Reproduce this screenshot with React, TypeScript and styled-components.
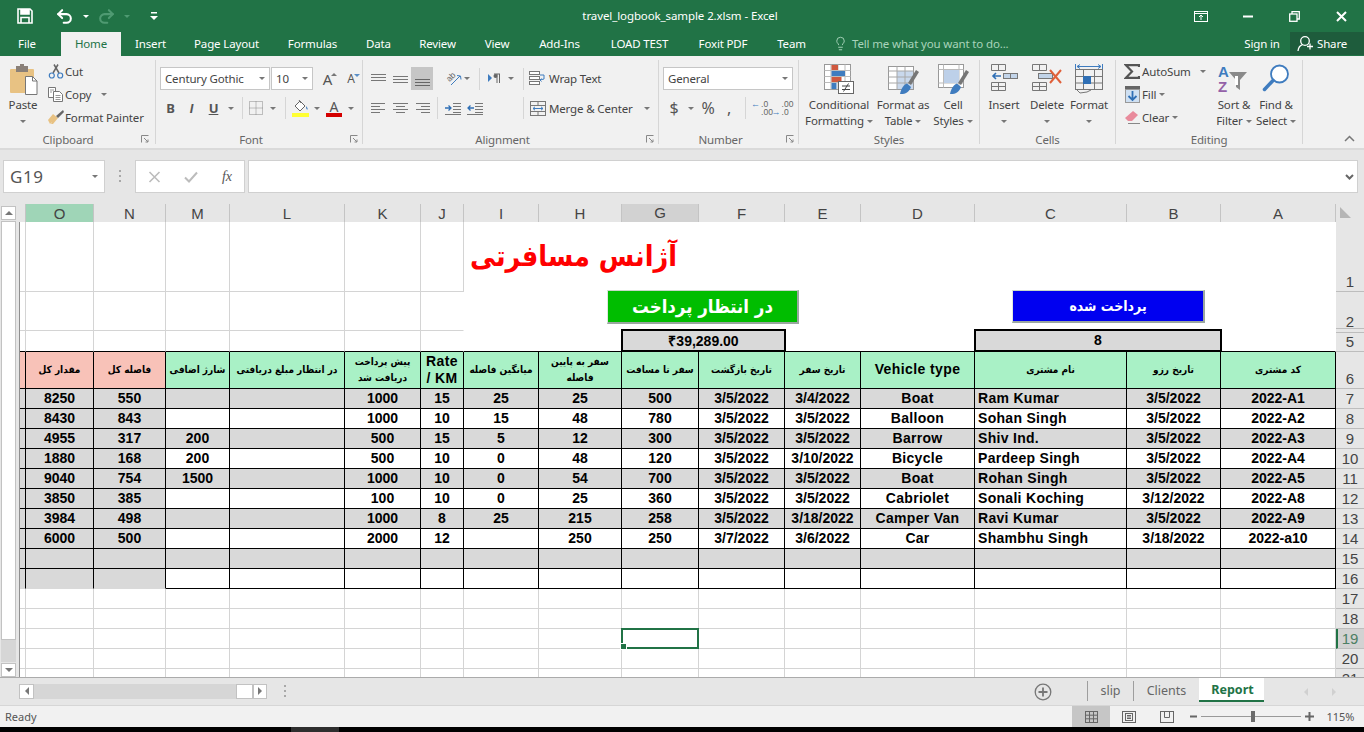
import React from 'react';
import styled, { createGlobalStyle } from 'styled-components';
import { Lightbulb, Redo2, Undo2 } from 'lucide-react';

const UI_FONT = '"Noto Sans", "Open Sans", sans-serif';
const SHEET_FONT = '"Liberation Sans", Arial, sans-serif';
const ARABIC_FONT = '"DejaVu Sans Condensed", "DejaVu Sans", "Liberation Sans", sans-serif';
const GREEN = '#217346';
const INK = '#000000';
const GRIDLINE = '#d4d4d4';
const TRACKS = '6px 68px 72px 64px 115px 76px 43px 75px 83px 77px 86px 76px 114px 152px 94px 115px 28px';

const GlobalStyle = createGlobalStyle`
  html, body { margin: 0; padding: 0; overflow: hidden; background: #000; }
  * { box-sizing: border-box; }
`;

const Page = styled.div`
  width: 1364px;
  height: 732px;
  display: flex;
  flex-direction: column;
  font-family: ${UI_FONT};
  color: #444;
  overflow: hidden;
`;

/* title bar */
const TitleBar = styled.div`
  height: 32px;
  flex: none;
  background: ${GREEN};
  color: #fff;
  display: flex;
  align-items: center;
  position: relative;
`;
const WindowTitle = styled.div`
  position: absolute;
  left: 0;
  right: 4px;
  top: 7px;
  text-align: center;
  font-size: 11.5px;
  letter-spacing: -0.1px;
  line-height: 17px;
  pointer-events: none;
`;
const Slot = styled.div<{ $w: number; $bg?: string }>`
  width: ${p => p.$w}px;
  flex: none;
  height: 100%;
  display: flex;
  align-items: center;
  justify-content: center;
  background: ${p => p.$bg ?? 'transparent'};
`;
const Push = styled.div`
  flex: 1;
`;

/* ribbon tabs */
const TabStrip = styled.div`
  height: 24px;
  flex: none;
  background: ${GREEN};
  color: #fff;
  display: flex;
  font-size: 11.5px;
  letter-spacing: -0.15px;
`;
const RibbonTab = styled.div<{ $w: number; $on?: boolean }>`
  width: ${p => p.$w}px;
  flex: none;
  display: flex;
  align-items: center;
  justify-content: center;
  padding-bottom: 1px;
  white-space: nowrap;
  background: ${p => (p.$on ? '#f1f1f1' : 'transparent')};
  color: ${p => (p.$on ? GREEN : '#fff')};
`;
const TellMe = styled.div`
  display: flex;
  align-items: center;
  gap: 4px;
  margin-left: 12px;
  padding-bottom: 1px;
  color: #a9d3bb;
  white-space: nowrap;
`;
const SignIn = styled.div`
  width: 74px;
  flex: none;
  display: flex;
  align-items: center;
  justify-content: center;
  padding: 0 0 1px 18px;
`;
const ShareBox = styled.div`
  width: 74px;
  flex: none;
  height: 23px;
  background: #1e5c3c;
  display: flex;
  align-items: center;
  gap: 3px;
  padding-left: 7px;
`;

/* ribbon */
const Ribbon = styled.div`
  height: 94px;
  flex: none;
  display: flex;
  padding-top: 4px;
  background: #f1f1f1;
  border-bottom: 2px solid #dadada;
  font-size: 11.5px;
  letter-spacing: -0.15px;
  position: relative;
`;
const Group = styled.div<{ $w: number }>`
  width: ${p => p.$w}px;
  flex: none;
  height: 84px;
  border-right: 1px solid #d6d6d6;
  display: flex;
  flex-direction: column;
`;
const GroupBody = styled.div<{ $left?: number }>`
  height: 72px;
  flex: none;
  display: flex;
  padding-left: ${p => p.$left ?? 0}px;
`;
const Column = styled.div<{ $top?: number }>`
  display: flex;
  flex-direction: column;
  padding-top: ${p => p.$top ?? 0}px;
`;
const ToolRow = styled.div<{ $gap?: number }>`
  display: flex;
  align-items: center;
  height: ${p => (p.$gap ? 24 : 23)}px;
  margin-top: ${p => p.$gap ?? 0}px;
`;
const GroupFoot = styled.div`
  height: 14px;
  flex: none;
  display: flex;
  align-items: center;
  color: #666;
  font-size: 11.5px;
`;
const FootLabel = styled.div`
  flex: 1;
  text-align: center;
`;
const Launcher = styled.div<{ $w: number }>`
  width: ${p => p.$w}px;
  flex: none;
  display: flex;
  justify-content: center;
`;
const Combo = styled.div<{ $w: number }>`
  width: ${p => p.$w}px;
  height: 23px;
  flex: none;
  margin-right: 1px;
  background: #fff;
  border: 1px solid #c6c6c6;
  display: flex;
  align-items: center;
  justify-content: space-between;
  padding: 0 4px 1px;
  white-space: nowrap;
`;
const Caret = styled.i`
  display: inline-block;
  flex: none;
  width: 0;
  height: 0;
  border-left: 3px solid transparent;
  border-right: 3px solid transparent;
  border-top: 3px solid #777;
`;
const Separator = styled.i`
  display: block;
  width: 1px;
  height: 22px;
  background: #d6d6d6;
`;
const FaceB = styled.span`
  font: bold 13px ${UI_FONT};
  color: #555;
`;
const FaceI = styled.span`
  font: italic bold 13px ${SHEET_FONT};
  color: #555;
`;
const FaceU = styled.span`
  font: bold 13px ${UI_FONT};
  color: #555;
  text-decoration: underline;
`;
const GrowA = styled.span<{ $size: number }>`
  font-size: ${p => p.$size}px;
  color: #555;
  position: relative;
  &::after {
    content: '';
    position: absolute;
    right: -5px;
    top: 4px;
    border-left: 3px solid transparent;
    border-right: 3px solid transparent;
    border-${p => (p.$size > 14 ? 'bottom' : 'top')}: 3px solid ${p => (p.$size > 14 ? '#777' : '#5b8fc7')};
  }
`;
const NumberFace = styled.span<{ $size: number }>`
  font-size: ${p => p.$size}px;
  color: #555;
`;
const SmallTool = styled.div<{ $icon: number }>`
  display: flex;
  align-items: center;
  height: 23px;
  padding-bottom: 1px;
  white-space: nowrap;
  & > :first-child {
    width: ${p => p.$icon}px;
    flex: none;
    display: flex;
    justify-content: center;
  }
`;
const ToolCaret = styled(Caret)<{ $gap: number }>`
  margin-left: ${p => p.$gap}px;
`;
const IndentedIcon = styled.span`
  padding-left: 6px;
`;
const AutoSumTool = styled(SmallTool)`
  width: 98px;
`;
const TextTool = styled.span<{ $w?: number }>`
  white-space: nowrap;
  ${p => (p.$w ? `width: ${p.$w}px; flex: none;` : '')}
`;
const BigTool = styled.div<{ $w: number }>`
  width: ${p => p.$w}px;
  flex: none;
  display: flex;
  flex-direction: column;
  align-items: center;
  line-height: 16px;
  white-space: nowrap;
`;
const BigIcon = styled.div`
  height: 37px;
  flex: none;
  display: flex;
  align-items: flex-start;
  justify-content: center;
  padding-top: 4px;
`;
const BigCaretLine = styled.div`
  height: 16px;
  display: flex;
  align-items: center;
  gap: 3px;
`;
const Collapse = styled.div`
  position: absolute;
  right: 9px;
  bottom: 6px;
  line-height: 0;
`;

/* formula bar */
const FormulaBar = styled.div`
  height: 54px;
  flex: none;
  background: #e6e6e6;
  display: flex;
  padding: 10px 6px 11px 3px;
`;
const InputBox = styled.div<{ $w?: number }>`
  ${p => (p.$w ? `width: ${p.$w}px; flex: none;` : 'flex: 1;')}
  background: #fff;
  border: 1px solid #d0d0d0;
  display: flex;
  align-items: center;
`;
const NameText = styled.span`
  font-size: 17px;
  letter-spacing: 0.6px;
  color: #555;
  padding-left: 6px;
  flex: 1;
`;
const Dots = styled.i`
  display: block;
  width: 2px;
  height: 14px;
  background: repeating-linear-gradient(#a8a8a8 0 2px, transparent 2px 5px);
`;
const FxText = styled.span`
  font: italic 14px "Liberation Serif", serif;
  color: #555;
`;

/* sheet */
const SheetArea = styled.div`
  height: 473px;
  flex: none;
  display: flex;
  background: #e6e6e6;
`;
const VScroll = styled.div`
  width: 19px;
  flex: none;
  display: flex;
  flex-direction: column;
  padding: 2px 3px 0 1px;
`;
const ScrollBtn = styled.div`
  height: 14px;
  flex: none;
  background: #fff;
  border: 1px solid #c2c2c2;
  display: flex;
  align-items: center;
  justify-content: center;
`;
const Arrow = styled.i<{ $dir: 'up' | 'down' | 'left' | 'right'; $c?: string }>`
  display: block;
  width: 0;
  height: 0;
  ${p =>
    p.$dir === 'up' || p.$dir === 'down'
      ? `border-left: 4px solid transparent; border-right: 4px solid transparent; border-${p.$dir === 'up' ? 'bottom' : 'top'}: 4px solid ${p.$c ?? '#777'};`
      : `border-top: 4px solid transparent; border-bottom: 4px solid transparent; border-${p.$dir === 'left' ? 'right' : 'left'}: 4px solid ${p.$c ?? '#777'};`}
`;
const VTrack = styled.div`
  flex: 1;
  display: flex;
  flex-direction: column;
  background: #d6d6d6;
  margin: 1px 0;
`;
const VThumb = styled.div`
  height: 419px;
  background: #fff;
  border: 1px solid #c2c2c2;
`;
const Sheet = styled.div`
  flex: 1;
  display: flex;
  flex-direction: column;
  min-width: 0;
`;
const ColumnHeads = styled.div`
  height: 18px;
  flex: none;
  display: grid;
  grid-template-columns: ${TRACKS};
  padding-left: 1px;
  font: 15px ${SHEET_FONT};
  color: #444;
`;
const ColHead = styled.div<{ $state?: 'sel' | 'tint' }>`
  display: flex;
  align-items: center;
  justify-content: center;
  padding-bottom: 1px;
  background: ${p => (p.$state === 'sel' ? '#d2d2d2' : p.$state === 'tint' ? '#9fd5b7' : '#e6e6e6')};
  border-right: 1px solid #c4c4c4;
  border-bottom: ${p => (p.$state === 'sel' ? `2px solid ${GREEN}` : '1px solid #a6a6a6')};
`;
const Corner = styled.div`
  background: #e6e6e6;
  border-bottom: 1px solid #a6a6a6;
  padding: 3px 0 0 4px;
  line-height: 0;
`;
const Body = styled.div`
  flex: 1;
  min-height: 0;
  position: relative;
  overflow: hidden;
  background: #fff;
  border-left: 1px solid #8f8f8f;
  display: grid;
  grid-template-columns: ${TRACKS};
  grid-template-rows: 70px 39px 21px 37px repeat(15, 20px);
  font: bold 14px ${SHEET_FONT};
  color: #000;
`;
const Cell = styled.div<{
  $fill?: string;
  $right?: string;
  $bottom?: string;
  $span?: number;
  $start?: boolean;
  $airy?: boolean;
}>`
  display: flex;
  align-items: center;
  justify-content: ${p => (p.$start ? 'flex-start' : 'center')};
  text-align: center;
  min-width: 0;
  white-space: nowrap;
  overflow: hidden;
  padding-left: ${p => (p.$start ? 3 : 0)}px;
  padding-bottom: 1px;
  letter-spacing: ${p => (p.$airy ? 0.3 : 0)}px;
  background: ${p => p.$fill ?? '#fff'};
  border-right: 1px solid ${p => p.$right ?? GRIDLINE};
  border-bottom: 1px solid ${p => p.$bottom ?? GRIDLINE};
  grid-column: span ${p => p.$span ?? 1};
`;
const HeadCell = styled(Cell)`
  font: bold 10px/16px ${ARABIC_FONT};
  white-space: normal;
  padding: 0 1px 1px;
  direction: rtl;
`;
const LatinHead = styled(Cell)`
  white-space: pre-line;
  line-height: 17px;
  letter-spacing: 0.4px;
`;
const TotalBox = styled(Cell)`
  margin: -2px -1px 0 -1px;
  border: 2px solid ${INK};
  position: relative;
  z-index: 1;
`;
const PageTitle = styled.span`
  direction: rtl;
  font: bold 28.5px ${ARABIC_FONT};
  color: #ff0000;
  margin: 0 0 0 3px;
`;
const ActiveCell = styled(Cell)`
  overflow: visible;
  position: relative;
  z-index: 2;
`;
const SelectionBox = styled.div`
  position: absolute;
  inset: -1px;
  border: 2px solid ${GREEN};
  &::after {
    content: '';
    position: absolute;
    left: -3px;
    bottom: -3px;
    width: 5px;
    height: 5px;
    background: ${GREEN};
    border: 1px solid #fff;
  }
`;
const ShapeButton = styled.div<{ $x: number; $w: number; $h: number; $fill: string; $size: number }>`
  position: absolute;
  left: ${p => p.$x}px;
  top: 68px;
  width: ${p => p.$w}px;
  height: ${p => p.$h}px;
  background: ${p => p.$fill};
  border-style: solid;
  border-width: 1px 2px 2px 1px;
  border-color: #c8d8c8 #9aa6a0 #9aa6a0 #dfe8df;
  color: #fff;
  display: flex;
  align-items: center;
  justify-content: center;
  direction: rtl;
  font: bold ${p => p.$size}px ${ARABIC_FONT};
  z-index: 1;
`;
const RowHead = styled.div<{ $active?: boolean; $gap?: 'above' | 'below' }>`
  background: ${p => (p.$active ? '#d2d2d2' : '#e6e6e6')};
  color: ${p => (p.$active ? '#4d7f64' : '#444')};
  border-left: ${p => (p.$active ? `2px solid ${GREEN}` : 'none')};
  border-bottom: ${p => (p.$gap === 'above' ? 'none' : '1px solid #bdbdbd')};
  box-shadow: ${p =>
    p.$gap === 'above'
      ? 'inset 0 -2px 0 #e6e6e6, inset 0 -3px 0 #bdbdbd'
      : p.$gap === 'below'
        ? 'inset 0 1px 0 #e6e6e6, inset 0 2px 0 #bdbdbd'
        : 'none'};
  font: 15px ${SHEET_FONT};
  display: flex;
  align-items: flex-end;
  justify-content: center;
  padding-bottom: 1px;
  padding-right: ${p => (p.$active ? 2 : 0)}px;
  line-height: 17px;
`;

/* sheet tabs */
const TabBar = styled.div`
  height: 29px;
  flex: none;
  background: #e6e6e6;
  border-top: 1px solid #ababab;
  border-bottom: 1px solid #d6d6d6;
  display: flex;
  align-items: center;
  padding-left: 19px;
  font-size: 12.5px;
  color: #555;
`;
const HScroll = styled.div`
  width: 248px;
  height: 15px;
  flex: none;
  display: flex;
  margin-bottom: 1px;
`;
const HButton = styled.div<{ $w: number }>`
  width: ${p => p.$w}px;
  flex: none;
  background: #fff;
  border: 1px solid #c2c2c2;
  display: flex;
  align-items: center;
  justify-content: center;
`;
const HTrack = styled.div`
  flex: 1;
  background: #d6d6d6;
`;
const SheetTab = styled.div<{ $w: number; $on?: boolean }>`
  width: ${p => p.$w}px;
  flex: none;
  height: 24px;
  align-self: flex-start;
  display: flex;
  align-items: center;
  justify-content: center;
  padding-left: ${p => (p.$on ? 2 : 0)}px;
  background: ${p => (p.$on ? '#fff' : 'transparent')};
  color: ${p => (p.$on ? GREEN : '#666')};
  font-weight: ${p => (p.$on ? 700 : 400)};
  border-bottom: ${p => (p.$on ? `2px solid ${GREEN}` : 'none')};
`;
const TabDivider = styled.i`
  display: block;
  flex: none;
  width: 1px;
  height: 20px;
  background: #9e9e9e;
  margin-bottom: 2px;
`;

/* status bar */
const StatusBar = styled.div`
  height: 21px;
  flex: none;
  background: #f1f1f1;
  display: flex;
  align-items: center;
  padding-left: 5px;
  font-size: 11px;
  color: #555;
`;
const StatusText = styled.span`
  padding-bottom: 1px;
`;
const ZoomSlider = styled.div`
  width: 100px;
  flex: none;
  height: 1px;
  background: #999;
  position: relative;
`;
const ZoomKnob = styled.div`
  position: absolute;
  left: 50px;
  top: -5px;
  width: 4px;
  height: 11px;
  background: #6b6b6b;
`;
const Taskbar = styled.div`
  height: 5px;
  flex: none;
  background: #000;
  display: flex;
  padding-left: 291px;
`;
const TaskbarItem = styled.div`
  width: 48px;
  background: #2e2e2e;
`;

const ExpandGlyph = () => (
  <svg width="9" height="9" viewBox="0 0 9 9" fill="none" stroke="#888">
    <path d="M.5 .5h7M.5 .5v7" />
    <path d="M3 3l4 4M7 4.5V7H4.5" />
  </svg>
);

const SaveIcon = () => (
  <svg width="16" height="16" viewBox="0 0 16 16" fill="none" stroke="#fff" strokeWidth="1.6">
    <path d="M1 1h12l2 2v12H1z" />
    <path d="M4 1v5h8V1" fill="#fff" />
    <path d="M4 15V9.500h8V15" />
  </svg>
);
const QatCustomize = () => (
  <svg width="8" height="9" viewBox="0 0 8 9" fill="#fff">
    <rect x="1" y="0" width="6" height="1.500" />
    <path d="M0 4h8L4 8z" />
  </svg>
);
const WhiteCaret = styled(Caret)<{ $dim?: boolean }>`
  border-top-color: ${p => (p.$dim ? '#4f9a72' : '#fff')};
`;
const RibbonDisplay = () => (
  <svg width="14" height="11" viewBox="0 0 14 11" fill="none" stroke="#fff">
    <rect x=".5" y=".5" width="13" height="10" />
    <path d="M.5 2.500h13M7 9V4.500M5 6l2-2 2 2" />
  </svg>
);
const MinimizeGlyph = () => (
  <svg width="10" height="3" viewBox="0 0 10 3">
    <rect width="10" height="2" y=".5" fill="#fff" />
  </svg>
);
const RestoreGlyph = () => (
  <svg width="11" height="11" viewBox="0 0 11 11" fill="none" stroke="#fff" strokeWidth="1.300">
    <rect x=".7" y="3" width="7.300" height="7.300" />
    <path d="M3 3V.7h7.300V8H8" />
  </svg>
);
const CloseGlyph = () => (
  <svg width="11" height="11" viewBox="0 0 11 11" stroke="#fff" strokeWidth="2">
    <path d="M1 1l9 9M10 1l-9 9" />
  </svg>
);
const ShareGlyph = () => (
  <svg width="17" height="17" viewBox="0 0 17 17" fill="none" stroke="#fff" strokeWidth="1.300">
    <circle cx="8" cy="6" r="4.300" />
    <path d="M1 16c.5-3.500 2.500-5.700 4.500-6.300M10 11.500h6M13 8.500v6" />
  </svg>
);
const PasteIcon = () => (
  <svg width="32" height="31" viewBox="-2 0 32 31">
    <rect x="1" y="5" width="24" height="24" rx="1" fill="#e8c283" />
    <rect x="7" y="2" width="12" height="6" fill="#8a8078" />
    <rect x="11" y="0" width="4" height="3" fill="#8a8078" />
    <path d="M16.500 12.500h7l4.500 4.500v13.500H16.500z" fill="#fff" stroke="#777" />
    <path d="M23.500 12.500V17H28" fill="none" stroke="#777" />
  </svg>
);
const ScissorsIcon = () => (
  <svg width="16" height="15" viewBox="0 0 16 15" fill="none">
    <path d="M5 9L10 .5M11 9L6 .5" stroke="#666" strokeWidth="1.500" />
    <circle cx="3.800" cy="11.500" r="2.500" stroke="#3f7cbf" strokeWidth="1.200" />
    <circle cx="12.200" cy="11.500" r="2.500" stroke="#3f7cbf" strokeWidth="1.200" />
  </svg>
);
const CopyIcon = () => (
  <svg width="16" height="15" viewBox="0 0 16 15" fill="#fff" stroke="#777">
    <path d="M.5 .5h7v10h-7z" />
    <path d="M5.500 4.500h6l3 3v7h-9z" />
    <path d="M2 3h4M2 5h2M7.500 8.500h5M7.500 10.500h5M7.500 12.500h5" fill="none" stroke="#999" />
  </svg>
);
const PainterIcon = () => (
  <svg width="16" height="14" viewBox="0 0 16 14">
    <path d="M0 10l5-6 5 4-5 6H3l1-2-2 2z" fill="#e8c283" />
    <path d="M6 4l2 2 7-6 1 2-6 6z" fill="#666" />
  </svg>
);
const BordersIcon = () => (
  <svg width="14" height="14" viewBox="0 0 14 14" fill="none" stroke="#888" strokeDasharray="1 1">
    <rect x=".5" y=".5" width="13" height="13" />
    <path d="M7 .5v13M.5 7h13" />
  </svg>
);
const FillBucketIcon = () => (
  <svg width="18" height="18" viewBox="0 0 18 18">
    <path d="M3 7l5-5 5 5-5 5z" fill="#fff" stroke="#666" />
    <path d="M7 1l2 3" stroke="#666" />
    <path d="M14 7c1.500 2 2 3 1.500 3.500S14 10 14 7z" fill="#3f7cbf" />
    <rect x="0" y="14" width="17" height="4" fill="#ffff33" />
  </svg>
);
const FontColorFace = styled.span`
  display: flex;
  flex-direction: column;
  align-items: center;
  width: 16px;
  font-size: 14px;
  line-height: 13px;
  color: #555;
  &::after {
    content: '';
    width: 16px;
    height: 4px;
    background: #d40000;
  }
`;
const Bars = ({ rows, w = 15, color = '#777' }: { rows: [number, number, number?][]; w?: number; color?: string }) => (
  <svg width={w} height="16" viewBox={`0 0 ${w} 16`} stroke={color}>
    {rows.map(([x, y, len], i) => (
      <path key={i} d={`M${x} ${y + 0.5}h${len ?? w - x}`} />
    ))}
  </svg>
);
const OrientIcon = () => (
  <svg width="17" height="17" viewBox="0 0 17 17" fill="none">
    <text x="2" y="10" fontSize="8.500" fill="#666" transform="rotate(-45 6 8)" fontFamily={SHEET_FONT}>ab</text>
    <path d="M6 15L15 6M12 5.500l3.500.5.500 3.500" stroke="#3f7cbf" />
  </svg>
);
const DirIcon = () => (
  <svg width="13" height="11" viewBox="0 0 13 11">
    <path d="M0 1l4 4-4 4z" fill="#3f7cbf" />
    <path d="M6 1h6M9 1v9M11.500 1v9" stroke="#666" />
    <circle cx="7.500" cy="3" r="2" fill="#666" />
  </svg>
);
const WrapIcon = () => (
  <svg width="17" height="16" viewBox="0 0 17 16" fill="#fff" stroke="#777">
    <rect x=".5" y=".5" width="10" height="3" />
    <rect x=".5" y="5.500" width="10" height="3" />
    <rect x=".5" y="10.500" width="10" height="3" />
    <path d="M11 4h4v4l-4 1M12.500 7.500L11 9l1.500 1.500" fill="none" stroke="#3f7cbf" />
  </svg>
);
const MergeIcon = () => (
  <svg width="16" height="15" viewBox="0 0 16 15" fill="none" stroke="#777">
    <rect x=".5" y=".5" width="15" height="14" />
    <path d="M.5 4.500h15M.5 10.500h15M8 .5v4M8 10.500v4" />
    <path d="M3 7.500h10M5 5.800L3 7.500l2 1.700M11 5.800l2 1.700-2 1.700" stroke="#3f7cbf" />
  </svg>
);
const IndentIcon = ({ out }: { out?: boolean }) => (
  <svg width="17" height="13" viewBox="0 0 17 13" fill="none" stroke="#777">
    <path d="M8 1.500h8M8 4.500h8M8 7.500h8M8 10.500h8M0 12.500h16" />
    <path d={out ? 'M7 6H1M3.500 3.500L1 6l2.500 2.500' : 'M0 6h6M3.500 3.500L6 6 3.500 8.500'} stroke="#2f6fb5" strokeWidth="1.300" />
  </svg>
);
const DecimalFace = styled.span`
  display: grid;
  grid-template-columns: auto auto;
  font: 8.500px/8px ${SHEET_FONT};
  color: #666;
  column-gap: 1px;
  align-items: center;
  letter-spacing: 0;
`;
const BlueArrow = styled.span`
  color: #3f7cbf;
  font-size: 9px;
`;
const CondIcon = () => (
  <svg width="31" height="31" viewBox="0 0 31 31">
    <rect x=".5" y=".5" width="26" height="25" fill="#fff" stroke="#999" />
    <path d="M7 .5v25M14 .5v25M21 .5v25M.5 6.500h26M.5 12.500h26M.5 18.500h26" stroke="#bbb" />
    <rect x="7.500" y="1" width="6.500" height="5" fill="#d0593f" />
    <rect x="7.500" y="7" width="13.500" height="5" fill="#3f7cbf" />
    <rect x="7.500" y="13" width="10" height="5" fill="#d0593f" />
    <rect x="7.500" y="19" width="5" height="6" fill="#3f7cbf" />
    <rect x="14.500" y="17.500" width="15" height="12" fill="#fff" stroke="#666" />
    <path d="M18 22h8M18 25.500h8M24.500 19.500l-5 8" stroke="#444" />
  </svg>
);
const TableIcon = () => (
  <svg width="31" height="31" viewBox="0 0 31 31">
    <rect x=".5" y="2.500" width="25" height="23" fill="#fff" stroke="#999" />
    <rect x="9" y="7" width="16" height="18" fill="#c9d8ec" />
    <path d="M9 2.500v23M17 2.500v23M.5 7h25M.5 13h25M.5 19h25" stroke="#a8a8a8" />
    <path d="M28 6l3 2-8 13-3-2z" fill="#777" />
    <path d="M19 19.500c-3 1-6 5-7 10.500 4 .5 9-1 11-7z" fill="#3f7cbf" />
  </svg>
);
const CellStylesIcon = () => (
  <svg width="31" height="31" viewBox="0 0 31 31">
    <rect x=".5" y=".5" width="25" height="23" fill="#fff" stroke="#999" />
    <path d="M.5 5.500h25M5.500 .5v23M21 .5v23M.5 19h25" stroke="#bbb" />
    <rect x="6" y="6" width="15" height="13" fill="#bdd0e9" />
    <path d="M28 6l3 2-8 13-3-2z" fill="#777" />
    <path d="M19 19.500c-3 1-6 5-7 10.500 4 .5 9-1 11-7z" fill="#3f7cbf" />
  </svg>
);
const InsertIcon = () => (
  <svg width="27" height="27" viewBox="0 0 27 27" fill="none" stroke="#777">
    <path d="M.5 .5h14v6H.5zM7.500 .5v6" />
    <path d="M.5 18.500h14v8H.5zM.5 22.500h14M7.500 18.500v8" />
    <rect x="12.500" y="9.500" width="14" height="5" fill="#c2d4e9" />
    <path d="M19.500 9.500v5" />
    <path d="M10 12H2M5 9l-3 3 3 3" stroke="#2f6fb5" strokeWidth="1.600" />
  </svg>
);
const DeleteIcon = () => (
  <svg width="30" height="27" viewBox="0 0 30 27" fill="none" stroke="#777">
    <path d="M.5 .5h14v6H.5zM7.500 .5v6" />
    <path d="M.5 18.500h14v8H.5zM.5 22.500h14M7.500 18.500v8" />
    <rect x="6.500" y="9.500" width="14" height="5" fill="#c2d4e9" />
    <path d="M18 6l11 13M29 6L18 19" stroke="#e0603a" strokeWidth="2" />
  </svg>
);
const FormatIcon = () => (
  <svg width="28" height="30" viewBox="0 0 28 30" fill="none" stroke="#777">
    <path d="M.5 0v5M27.500 0v5" stroke="#3f7cbf" />
    <path d="M2 2.500h24M5 .5L2 2.500l3 2M23 .5l3 2-3 2" stroke="#3f7cbf" />
    <rect x=".5" y="5.500" width="27" height="20" />
    <path d="M8.500 5.500v20M19.500 5.500v20M.5 12.500h27M.5 19h27" />
    <rect x="8" y="12" width="8" height="8" fill="#2f6fb5" stroke="none" />
    <path d="M2 26l3 3 7-1 4-2" />
  </svg>
);
const SigmaIcon = () => (
  <svg width="16" height="15" viewBox="0 0 16 15" fill="none" stroke="#555" strokeWidth="2.200">
    <path d="M15 3V1.200H2L8 7.500 2 13.800h13V12" />
  </svg>
);
const FillDownIcon = () => (
  <svg width="15" height="17" viewBox="0 0 15 17">
    <rect width="15" height="3" fill="#666" />
    <rect x=".5" y="3.500" width="14" height="13" fill="#cfe0f2" stroke="#999" />
    <path d="M7.500 5v9M3.500 10l4 4 4-4" fill="none" stroke="#2f6fb5" strokeWidth="1.800" />
  </svg>
);
const EraserIcon = () => (
  <svg width="15" height="13" viewBox="0 0 15 13">
    <path d="M8 0l5 4-6 6H3L0 7z" fill="#e98b9c" />
    <path d="M3 12.500h12" stroke="#888" />
  </svg>
);
const SortIcon = () => (
  <svg width="32" height="30" viewBox="0 0 32 30">
    <text x="0" y="13" fontSize="15" fontWeight="700" fill="#3f7cbf" fontFamily={SHEET_FONT}>A</text>
    <text x="0" y="28" fontSize="15" fontWeight="700" fill="#9461a8" fontFamily={SHEET_FONT}>Z</text>
    <path d="M11 8h18l-7 8v10l-4-3v-7z" fill="#8a8a8a" />
    <path d="M17 12v9h3v-9" fill="#fff" />
  </svg>
);
const FindIcon = () => (
  <svg width="28" height="28" viewBox="0 0 28 28" fill="none">
    <circle cx="17.500" cy="10" r="8.500" stroke="#3f7cbf" strokeWidth="1.800" fill="#fff" />
    <path d="M11 16.500L2.500 25.500" stroke="#3f7cbf" strokeWidth="3.500" strokeLinecap="round" />
  </svg>
);
const ChevronUp = () => (
  <svg width="11" height="7" viewBox="0 0 11 7" fill="none" stroke="#777" strokeWidth="1.500">
    <path d="M1 6l4.500-4.500L10 6" />
  </svg>
);
const ChevronDown = () => (
  <svg width="9" height="6" viewBox="0 0 9 6" fill="none" stroke="#666" strokeWidth="2">
    <path d="M1 1l3.500 3.500L8 1" />
  </svg>
);
const CrossMark = () => (
  <svg width="13" height="12" viewBox="0 0 13 12" stroke="#bcbcbc" strokeWidth="1.600">
    <path d="M1.500 1l10 10M11.500 1l-10 10" />
  </svg>
);
const CheckMark = () => (
  <svg width="14" height="12" viewBox="0 0 14 12" fill="none" stroke="#bcbcbc" strokeWidth="2">
    <path d="M1 6.500L5 10.500 13 1.500" />
  </svg>
);
const CornerMark = () => (
  <svg width="12" height="12" viewBox="0 0 12 12">
    <path d="M0 0l11 11H0z" fill="#b5b5b5" />
  </svg>
);
const AddSheet = () => (
  <svg width="18" height="18" viewBox="0 0 18 18" fill="none" stroke="#777">
    <circle cx="9" cy="9" r="7.800" strokeWidth="1.300" />
    <path d="M9 4.500v9M4.500 9h9" strokeWidth="1.800" />
  </svg>
);
const NormalView = () => (
  <svg width="13" height="12" viewBox="0 0 13 12" fill="none" stroke="#666">
    <rect x=".5" y=".5" width="12" height="11" />
    <path d="M4.500 .5v11M8.500 .5v11M.5 4.200h12M.5 7.800h12" />
  </svg>
);
const LayoutView = () => (
  <svg width="14" height="12" viewBox="0 0 14 12" fill="none" stroke="#666">
    <rect x=".5" y=".5" width="13" height="11" />
    <rect x="3.500" y="2.500" width="7" height="7" />
    <path d="M5 4.500h4M5 6h4M5 7.500h4" />
  </svg>
);
const BreakView = () => (
  <svg width="14" height="12" viewBox="0 0 14 12" fill="none" stroke="#666">
    <rect x=".5" y=".5" width="13" height="11" />
    <path d="M4.500 .5v6h5v-6" />
  </svg>
);
const ZoomMinus = () => (
  <svg width="7" height="3" viewBox="0 0 7 3">
    <rect width="7" height="2" y=".5" fill="#666" />
  </svg>
);
const ZoomPlus = () => (
  <svg width="9" height="9" viewBox="0 0 9 9" fill="#666">
    <rect x="0" y="3.500" width="9" height="2" />
    <rect x="3.500" y="0" width="2" height="9" />
  </svg>
);

const Launch = ({ w }: { w: number }) => (
  <Launcher $w={w}>
    <ExpandGlyph />
  </Launcher>
);

const COLUMN_LETTERS = ['O', 'N', 'M', 'L', 'K', 'J', 'I', 'H', 'G', 'F', 'E', 'D', 'C', 'B', 'A'];
const HEADINGS = [
  'مقدار کل',
  'فاصله کل',
  'شارژ اضافی',
  'در انتظار مبلغ دریافتی',
  'پیش پرداخت دریافت شد',
  'Rate\n/ KM',
  'میانگین فاصله',
  'سفر به پایین فاصله',
  'سفر تا مسافت',
  'تاریخ بازگشت',
  'تاریخ سفر',
  'Vehicle type',
  'نام مشتری',
  'تاریخ رزو',
  'کد مشتری',
];
const D = '3/5/2022';
const TRIPS: string[][] = [
  ['8250', '550', '', '', '1000', '15', '25', '25', '500', D, '3/4/2022', 'Boat', 'Ram Kumar', D, '2022-A1'],
  ['8430', '843', '', '', '1000', '10', '15', '48', '780', D, D, 'Balloon', 'Sohan Singh', D, '2022-A2'],
  ['4955', '317', '200', '', '500', '15', '5', '12', '300', D, D, 'Barrow', 'Shiv Ind.', D, '2022-A3'],
  ['1880', '168', '200', '', '500', '10', '0', '48', '120', D, '3/10/2022', 'Bicycle', 'Pardeep Singh', D, '2022-A4'],
  ['9040', '754', '1500', '', '1000', '10', '0', '54', '700', D, D, 'Boat', 'Rohan Singh', D, '2022-A5'],
  ['3850', '385', '', '', '100', '10', '0', '25', '360', D, D, 'Cabriolet', 'Sonali Koching', '3/12/2022', '2022-A8'],
  ['3984', '498', '', '', '1000', '8', '25', '215', '258', D, '3/18/2022', 'Camper Van', 'Ravi Kumar', D, '2022-A9'],
  ['6000', '500', '', '', '2000', '12', '', '250', '250', '3/7/2022', '3/6/2022', 'Car', 'Shambhu Singh', '3/18/2022', '2022-a10'],
  ['', '', '', '', '', '', '', '', '', '', '', '', '', '', ''],
];
const GREY = '#d9d9d9';
const MINT = '#a9f1c6';
const ROSE = '#f8c2b8';

const tripFill = (rowIndex: number, col: number) => (rowIndex % 2 === 0 || col <= 1 ? GREY : '#fff');

const QuickBar = () => (
  <TitleBar>
    <Slot $w={50}><SaveIcon /></Slot>
    <Slot $w={29}><Undo2 size={19} strokeWidth={2.6} color="#fff" /></Slot>
    <Slot $w={14}><WhiteCaret /></Slot>
    <Slot $w={26}><Redo2 size={19} strokeWidth={2.6} color="#4f9a72" /></Slot>
    <Slot $w={15}><WhiteCaret $dim /></Slot>
    <Slot $w={39}><QatCustomize /></Slot>
    <WindowTitle>travel_logbook_sample 2.xlsm - Excel</WindowTitle>
    <Push />
    <Slot $w={46}><RibbonDisplay /></Slot>
    <Slot $w={47}><MinimizeGlyph /></Slot>
    <Slot $w={47}><RestoreGlyph /></Slot>
    <Slot $w={46}><CloseGlyph /></Slot>
  </TitleBar>
);

const Tabs = () => (
  <TabStrip>
    <RibbonTab $w={54}>File</RibbonTab>
    <RibbonTab $w={7} />
    <RibbonTab $w={60} $on>Home</RibbonTab>
    <RibbonTab $w={59}>Insert</RibbonTab>
    <RibbonTab $w={93}>Page Layout</RibbonTab>
    <RibbonTab $w={79}>Formulas</RibbonTab>
    <RibbonTab $w={53}>Data</RibbonTab>
    <RibbonTab $w={65}>Review</RibbonTab>
    <RibbonTab $w={54}>View</RibbonTab>
    <RibbonTab $w={71}>Add-Ins</RibbonTab>
    <RibbonTab $w={89}>LOAD TEST</RibbonTab>
    <RibbonTab $w={78}>Foxit PDF</RibbonTab>
    <RibbonTab $w={59}>Team</RibbonTab>
    <TellMe>
      <Lightbulb size={15} strokeWidth={1.5} color="#a9d3bb" />
      Tell me what you want to do...
    </TellMe>
    <Push />
    <SignIn>Sign in</SignIn>
    <ShareBox>
      <ShareGlyph />
      Share
    </ShareBox>
  </TabStrip>
);

const Big = ({ w, icon, lines, caret }: { w: number; icon: React.ReactNode; lines: string[]; caret?: boolean }) => (
  <BigTool $w={w}>
    <BigIcon>{icon}</BigIcon>
    {lines.map((line, i) => (
      <BigCaretLine key={line}>
        {line}
        {caret && i === lines.length - 1 && <Caret />}
      </BigCaretLine>
    ))}
    {!caret && lines.length === 1 && (
      <BigCaretLine>
        <Caret />
      </BigCaretLine>
    )}
  </BigTool>
);

const HomeRibbon = () => (
  <Ribbon>
    <Group $w={156}>
      <GroupBody>
        <Big w={46} icon={<PasteIcon />} lines={['Paste']} />
        <Column>
          <SmallTool $icon={19}>
            <span><ScissorsIcon /></span>Cut
          </SmallTool>
          <SmallTool $icon={19}>
            <span><CopyIcon /></span>Copy<ToolCaret $gap={10} />
          </SmallTool>
          <SmallTool $icon={19}>
            <span><PainterIcon /></span>Format Painter
          </SmallTool>
        </Column>
      </GroupBody>
      <GroupFoot>
        <FootLabel>Clipboard</FootLabel>
        <Launch w={19} />
      </GroupFoot>
    </Group>

    <Group $w={207}>
      <GroupBody $left={4}>
        <Column $top={7}>
          <ToolRow>
            <Combo $w={110}>Century Gothic<Caret /></Combo>
            <Combo $w={42}>10<Caret /></Combo>
            <Slot $w={27}><GrowA $size={15}>A</GrowA></Slot>
            <Slot $w={20}><GrowA $size={12}>A</GrowA></Slot>
          </ToolRow>
          <ToolRow $gap={6}>
            <Slot $w={21}><FaceB>B</FaceB></Slot>
            <Slot $w={21}><FaceI>I</FaceI></Slot>
            <Slot $w={23}><FaceU>U</FaceU></Slot>
            <Slot $w={12}><Caret /></Slot>
            <Slot $w={10}><Separator /></Slot>
            <Slot $w={18}><BordersIcon /></Slot>
            <Slot $w={15}><Caret /></Slot>
            <Slot $w={10}><Separator /></Slot>
            <Slot $w={21}><FillBucketIcon /></Slot>
            <Slot $w={12}><Caret /></Slot>
            <Slot $w={22}><FontColorFace>A</FontColorFace></Slot>
            <Slot $w={12}><Caret /></Slot>
          </ToolRow>
        </Column>
      </GroupBody>
      <GroupFoot>
        <FootLabel>Font</FootLabel>
        <Launch w={16} />
      </GroupFoot>
    </Group>

    <Group $w={296}>
      <GroupBody $left={4}>
        <Column $top={7}>
          <ToolRow>
            <Slot $w={22}><Bars rows={[[0, 3], [0, 6], [0, 9]]} /></Slot>
            <Slot $w={22}><Bars rows={[[0, 5], [0, 8], [0, 11]]} /></Slot>
            <Slot $w={22} $bg="#c6c6c6"><Bars rows={[[0, 8], [0, 11], [0, 14]]} color="#666" /></Slot>
            <Slot $w={12} />
            <Slot $w={17}><OrientIcon /></Slot>
            <Slot $w={10}><Caret /></Slot>
            <Slot $w={14}><Separator /></Slot>
            <Slot $w={16}><DirIcon /></Slot>
            <Slot $w={18}><Caret /></Slot>
            <Slot $w={6}><Separator /></Slot>
            <Slot $w={23}><WrapIcon /></Slot>
            <TextTool>Wrap Text</TextTool>
          </ToolRow>
          <ToolRow $gap={6}>
            <Slot $w={22}><Bars rows={[[0, 3, 14], [0, 6, 9], [0, 9, 14], [0, 12, 9]]} /></Slot>
            <Slot $w={22}><Bars rows={[[0, 3, 15], [3, 6, 9], [0, 9, 15], [3, 12, 9]]} /></Slot>
            <Slot $w={22}><Bars rows={[[1, 3, 14], [6, 6, 9], [1, 9, 14], [6, 12, 9]]} /></Slot>
            <Slot $w={8}><Separator /></Slot>
            <Slot $w={24}><IndentIcon /></Slot>
            <Slot $w={21}><IndentIcon out /></Slot>
            <Slot $w={34} />
            <Slot $w={6}><Separator /></Slot>
            <Slot $w={23}><MergeIcon /></Slot>
            <TextTool $w={95}>Merge &amp; Center</TextTool>
            <Caret />
          </ToolRow>
        </Column>
      </GroupBody>
      <GroupFoot>
        <FootLabel>Alignment</FootLabel>
        <Launch w={16} />
      </GroupFoot>
    </Group>

    <Group $w={140}>
      <GroupBody $left={4}>
        <Column $top={7}>
          <ToolRow>
            <Combo $w={130}>General<Caret /></Combo>
          </ToolRow>
          <ToolRow $gap={6}>
            <Slot $w={22}><NumberFace $size={16}>$</NumberFace></Slot>
            <Slot $w={11}><Caret /></Slot>
            <Slot $w={24}><NumberFace $size={16}>%</NumberFace></Slot>
            <Slot $w={18}><NumberFace $size={16}>,</NumberFace></Slot>
            <Slot $w={14}><Separator /></Slot>
            <Slot $w={20}>
              <DecimalFace><BlueArrow>←</BlueArrow><span>.0</span><span /><span>.00</span></DecimalFace>
            </Slot>
            <Slot $w={21}>
              <DecimalFace><span /><span>.00</span><BlueArrow>→</BlueArrow><span>.0</span></DecimalFace>
            </Slot>
          </ToolRow>
        </Column>
      </GroupBody>
      <GroupFoot>
        <FootLabel>Number</FootLabel>
        <Launch w={16} />
      </GroupFoot>
    </Group>

    <Group $w={181}>
      <GroupBody>
        <Big w={80} icon={<CondIcon />} lines={['Conditional', 'Formatting']} caret />
        <Big w={48} icon={<TableIcon />} lines={['Format as', 'Table']} caret />
        <Big w={52} icon={<CellStylesIcon />} lines={['Cell', 'Styles']} caret />
      </GroupBody>
      <GroupFoot>
        <FootLabel>Styles</FootLabel>
      </GroupFoot>
    </Group>

    <Group $w={136}>
      <GroupBody>
        <Big w={48} icon={<InsertIcon />} lines={['Insert']} />
        <Big w={38} icon={<DeleteIcon />} lines={['Delete']} />
        <Big w={46} icon={<FormatIcon />} lines={['Format']} />
      </GroupBody>
      <GroupFoot>
        <FootLabel>Cells</FootLabel>
      </GroupFoot>
    </Group>

    <Group $w={187}>
      <GroupBody>
        <Column>
          <AutoSumTool $icon={26}>
            <IndentedIcon><SigmaIcon /></IndentedIcon>AutoSum<ToolCaret $gap={9} />
          </AutoSumTool>
          <SmallTool $icon={26}>
            <IndentedIcon><FillDownIcon /></IndentedIcon>Fill<ToolCaret $gap={3} />
          </SmallTool>
          <SmallTool $icon={26}>
            <IndentedIcon><EraserIcon /></IndentedIcon>Clear<ToolCaret $gap={3} />
          </SmallTool>
        </Column>
        <Big w={40} icon={<SortIcon />} lines={['Sort &', 'Filter']} caret />
        <Big w={44} icon={<FindIcon />} lines={['Find &', 'Select']} caret />
      </GroupBody>
      <GroupFoot>
        <FootLabel>Editing</FootLabel>
      </GroupFoot>
    </Group>
    <Collapse><ChevronUp /></Collapse>
  </Ribbon>
);

const Formula = () => (
  <FormulaBar>
    <InputBox $w={102}>
      <NameText>G19</NameText>
      <Slot $w={18}><Caret /></Slot>
    </InputBox>
    <Slot $w={30}><Dots /></Slot>
    <InputBox $w={110}>
      <Slot $w={36}><CrossMark /></Slot>
      <Slot $w={38}><CheckMark /></Slot>
      <Slot $w={34}><FxText>fx</FxText></Slot>
    </InputBox>
    <Slot $w={3} />
    <InputBox>
      <Push />
      <Slot $w={16}><ChevronDown /></Slot>
    </InputBox>
  </FormulaBar>
);

const blankCells = (prefix: string, count: number, bottom?: string) =>
  Array.from({ length: count }, (_, i) => <Cell key={`${prefix}${i}`} $bottom={bottom} />);

const WorkSheet = () => (
  <SheetArea>
    <VScroll>
      <ScrollBtn><Arrow $dir="up" /></ScrollBtn>
      <VTrack><VThumb /></VTrack>
      <ScrollBtn><Arrow $dir="down" /></ScrollBtn>
    </VScroll>
    <Sheet>
      <ColumnHeads>
        <ColHead />
        {COLUMN_LETTERS.map(letter => (
          <ColHead key={letter} $state={letter === 'O' ? 'tint' : letter === 'G' ? 'sel' : undefined}>
            {letter}
          </ColHead>
        ))}
        <Corner><CornerMark /></Corner>
      </ColumnHeads>
      <Body>
        {/* rows 1 and 2 */}
        {blankCells('a', 7)}
        <Cell $span={9} $right="#fff" $bottom="#fff" $start>
          <PageTitle>آژانس مسافرتی</PageTitle>
        </Cell>
        <RowHead>1</RowHead>
        {blankCells('b', 6)}
        <Cell $right="#fff" />
        <Cell $span={9} $right="#fff" $bottom="#fff" />
        <RowHead $gap="above">2</RowHead>

        {/* row 5 with the totals */}
        {blankCells('c', 6, INK)}
        <Cell $right="#fff" $bottom={INK} />
        <Cell $span={2} $right="#fff" $bottom={INK} />
        <TotalBox $span={2} $fill={GREY}>₹39,289.00</TotalBox>
        <Cell $span={2} $right="#fff" $bottom={INK} />
        <TotalBox $span={2} $fill={GREY}>8</TotalBox>
        <Cell $right="#fff" $bottom={INK} />
        <RowHead $gap="below">5</RowHead>

        {/* row 6 headings */}
        <HeadCell $fill={ROSE} $right={INK} $bottom={INK} />
        {HEADINGS.map((text, col) =>
          /[A-Za-z]/.test(text) ? (
            <LatinHead key={text} $fill={MINT} $right={INK} $bottom={INK}>{text}</LatinHead>
          ) : (
            <HeadCell key={text} $fill={col < 2 ? ROSE : MINT} $right={INK} $bottom={INK}>{text}</HeadCell>
          )
        )}
        <RowHead>6</RowHead>

        {/* rows 7 to 15 */}
        {TRIPS.map((trip, rowIndex) => (
          <React.Fragment key={rowIndex}>
            <Cell $fill={GREY} $right={INK} $bottom={INK} />
            {trip.map((value, col) => (
              <Cell
                key={col}
                $fill={tripFill(rowIndex, col)}
                $right={INK}
                $bottom={INK}
                $start={col === 12}
                $airy={col === 11 || col === 12}
              >
                {value}
              </Cell>
            ))}
            <RowHead>{rowIndex + 7}</RowHead>
          </React.Fragment>
        ))}

        {/* row 16 */}
        <Cell $fill={GREY} $right={INK} $bottom="transparent" />
        <Cell $fill={GREY} $right={INK} $bottom="transparent" />
        <Cell $fill={GREY} $right={INK} $bottom="transparent" />
        {Array.from({ length: 13 }, (_, i) => (
          <Cell key={i} $right={INK} $bottom={INK} />
        ))}
        <RowHead>16</RowHead>

        {/* empty rows under the table */}
        {[17, 18, 19, 20, 21].map(row => (
          <React.Fragment key={row}>
            {COLUMN_LETTERS.concat('P').map((_, i) =>
              row === 19 && i === 9 ? (
                <ActiveCell key={i}><SelectionBox /></ActiveCell>
              ) : (
                <Cell key={i} />
              )
            )}
            <RowHead $active={row === 19}>{row}</RowHead>
          </React.Fragment>
        ))}

        <ShapeButton $x={587} $w={192} $h={34} $fill="#00bd00" $size={18.5}>در انتظار پرداخت</ShapeButton>
        <ShapeButton $x={992} $w={193} $h={33} $fill="#0000f0" $size={14}>پرداخت شده</ShapeButton>
      </Body>
    </Sheet>
  </SheetArea>
);

const SheetTabs = () => (
  <TabBar>
    <HScroll>
      <HButton $w={15}><Arrow $dir="left" /></HButton>
      <HTrack />
      <HButton $w={17} />
      <HButton $w={14}><Arrow $dir="right" /></HButton>
    </HScroll>
    <Slot $w={35}><Dots /></Slot>
    <Push />
    <Slot $w={18}><AddSheet /></Slot>
    <Slot $w={35} />
    <TabDivider />
    <SheetTab $w={45}>slip</SheetTab>
    <TabDivider />
    <SheetTab $w={65}>Clients</SheetTab>
    <SheetTab $w={65} $on>Report</SheetTab>
    <Slot $w={35} />
    <Slot $w={14}><Arrow $dir="left" $c="#d0d0d0" /></Slot>
    <Slot $w={14} />
    <Slot $w={14}><Arrow $dir="right" $c="#d0d0d0" /></Slot>
    <Slot $w={23} />
  </TabBar>
);

const Status = () => (
  <StatusBar>
    <StatusText>Ready</StatusText>
    <Push />
    <Slot $w={38} $bg="#c6c6c6"><NormalView /></Slot>
    <Slot $w={38}><LayoutView /></Slot>
    <Slot $w={38}><BreakView /></Slot>
    <Slot $w={15}><ZoomMinus /></Slot>
    <ZoomSlider><ZoomKnob /></ZoomSlider>
    <Slot $w={16}><ZoomPlus /></Slot>
    <Slot $w={47}><StatusText>115%</StatusText></Slot>
  </StatusBar>
);

export default function App() {
  return (
    <Page>
      <GlobalStyle />
      <QuickBar />
      <Tabs />
      <HomeRibbon />
      <Formula />
      <WorkSheet />
      <SheetTabs />
      <Status />
      <Taskbar>
        <TaskbarItem />
      </Taskbar>
    </Page>
  );
}
